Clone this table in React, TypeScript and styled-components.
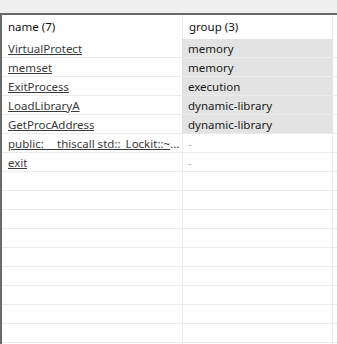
import React from "react";
import styled, { createGlobalStyle } from "styled-components";

const Global = createGlobalStyle`
  html, body { margin: 0; padding: 0; background: #f0f0f0; overflow: hidden; }
  body { font-family: "Segoe UI", "Noto Sans", "Open Sans", sans-serif; font-size: 11.5px; }
`;

const Frame = styled.div`
  margin-top: 13px;
  height: 331px;
  border-top: 2px solid #696969;
  border-left: 2px solid #696969;
  background: #ffffff;
  overflow: hidden;
`;

const Grid = styled.div`
  display: grid;
  grid-template-columns: 181px 150px 1fr;
`;

const HeadCell = styled.div<{ $last?: boolean }>`
  height: 24px;
  box-sizing: border-box;
  border-bottom: 1px solid #ffffff;
  border-right: ${(p) => (p.$last ? "none" : "1px solid #ebebeb")};
  padding-left: 6px;
  padding-bottom: 1px;
  display: flex;
  align-items: center;
  color: #111;
  white-space: nowrap;
`;

const Cell = styled.div<{ $shade?: boolean; $last?: boolean; $pad?: number }>`
  height: 19px;
  box-sizing: border-box;
  border-bottom: 1px solid #ebebeb;
  border-right: ${(p) => (p.$last ? "none" : "1px solid #ebebeb")};
  padding-left: ${(p) => p.$pad ?? 6}px;
  padding-right: 2px;
  display: flex;
  align-items: center;
  white-space: nowrap;
  overflow: hidden;
  background: ${(p) => (p.$shade ? "#e3e3e3" : "transparent")};
  ${(p) => (p.$shade ? "border-right-color: #e3e3e3; box-shadow: -1px 0 0 #e3e3e3;" : "")}
`;

const Link = styled.span`
  color: #3a3a3a;
  text-decoration: underline;
  text-underline-offset: 1px;
  overflow: hidden;
  text-overflow: ellipsis;
  white-space: nowrap;
  display: block;
  min-width: 0;
  max-width: 100%;
`;

const Group = styled.span`
  color: #1a1a1a;
`;

const Dash = styled.span`
  color: #b4b4b4;
`;

const rows: { name: string; group: string | null }[] = [
  { name: "VirtualProtect", group: "memory" },
  { name: "memset", group: "memory" },
  { name: "ExitProcess", group: "execution" },
  { name: "LoadLibraryA", group: "dynamic-library" },
  { name: "GetProcAddress", group: "dynamic-library" },
  { name: "public: __thiscall std::_Lockit::~_Lockit(void)", group: null },
  { name: "exit", group: null },
];

export default function App() {
  const empties = Array.from({ length: 10 });
  return (
    <>
      <Global />
      <Frame>
        <Grid>
          <HeadCell>name (7)</HeadCell>
          <HeadCell>group (3)</HeadCell>
          <HeadCell $last />
          {rows.map((r) => (
            <React.Fragment key={r.name}>
              <Cell>
                <Link>{r.name}</Link>
              </Cell>
              <Cell $shade={!!r.group} $pad={5}>
                {r.group ? <Group>{r.group}</Group> : <Dash>-</Dash>}
              </Cell>
              <Cell $last />
            </React.Fragment>
          ))}
          {empties.map((_, i) => (
            <React.Fragment key={i}>
              <Cell />
              <Cell />
              <Cell $last />
            </React.Fragment>
          ))}
        </Grid>
      </Frame>
    </>
  );
}
